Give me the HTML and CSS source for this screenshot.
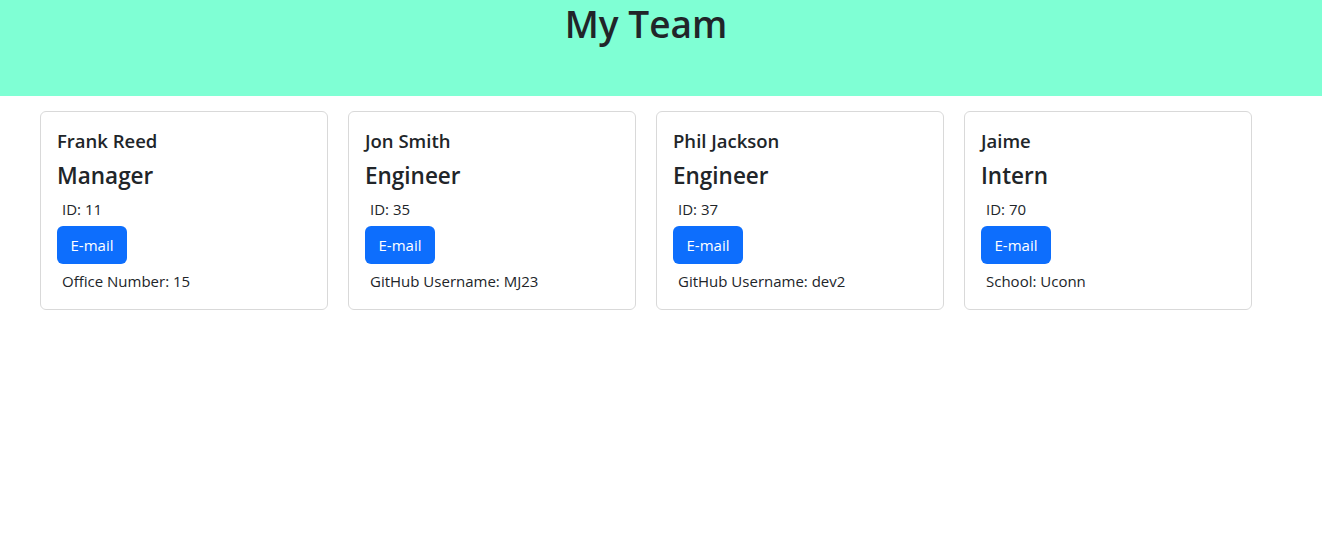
FILE: index.html
```html
<!DOCTYPE html>
<html lang="en">
<head>
<meta charset="utf-8">
<title>My Team</title>
<link rel="stylesheet" href="styles.css">
</head>
<body>
<header class="banner">
  <h1 class="banner-title">My Team</h1>
</header>
<main class="team">
  <div class="card">
    <h5 class="name">Frank Reed</h5>
    <h4 class="role">Manager</h4>
    <p class="info">ID: 11</p>
    <a class="btn" href="#">E-mail</a>
    <p class="info">Office Number: 15</p>
  </div>
  <div class="card">
    <h5 class="name">Jon Smith</h5>
    <h4 class="role">Engineer</h4>
    <p class="info">ID: 35</p>
    <a class="btn" href="#">E-mail</a>
    <p class="info">GitHub Username: MJ23</p>
  </div>
  <div class="card">
    <h5 class="name">Phil Jackson</h5>
    <h4 class="role">Engineer</h4>
    <p class="info">ID: 37</p>
    <a class="btn" href="#">E-mail</a>
    <p class="info">GitHub Username: dev2</p>
  </div>
  <div class="card">
    <h5 class="name">Jaime</h5>
    <h4 class="role">Intern</h4>
    <p class="info">ID: 70</p>
    <a class="btn" href="#">E-mail</a>
    <p class="info">School: Uconn</p>
  </div>
</main>
</body>
</html>
```
FILE: styles.css
```css
* { box-sizing: border-box; }
body {
  margin: 0;
  font-family: "Open Sans", "Noto Sans", sans-serif;
  font-size: 15px;
  line-height: 1.5;
  color: #212529;
  background: #fff;
}
.banner {
  background: #7fffd4;
  height: 96px;
  padding-right: 30px;
  text-align: center;
}
.banner-title {
  margin: 0;
  font-size: 37px;
  font-weight: 600;
  line-height: 1.2;
  padding-top: 2px;
}
.team {
  display: flex;
  gap: 20px;
  padding: 15px 0 0 40px;
}
.card {
  width: 288px;
  border: 1px solid #d9d9d9;
  border-radius: 6px;
  padding: 16px;
  display: flex;
  flex-direction: column;
  align-items: flex-start;
}
.name {
  margin: 1px 0 8px;
  font-size: 18.5px;
  font-weight: 600;
  line-height: 24px;
}
.role {
  margin: 0 0 7px;
  padding-top: 0;
  font-size: 22.5px;
  font-weight: 600;
  line-height: 29px;
}
.info {
  margin: 0;
  padding: 0 5px;
  line-height: 24px;
}
.btn {
  margin: 5px 0;
  background: #0d6efd;
  color: #fff;
  text-decoration: none;
  border-radius: 6px;
  padding: 0 12px;
  height: 38px;
  line-height: 38px;
  width: 70px;
  text-align: center;
}
```
